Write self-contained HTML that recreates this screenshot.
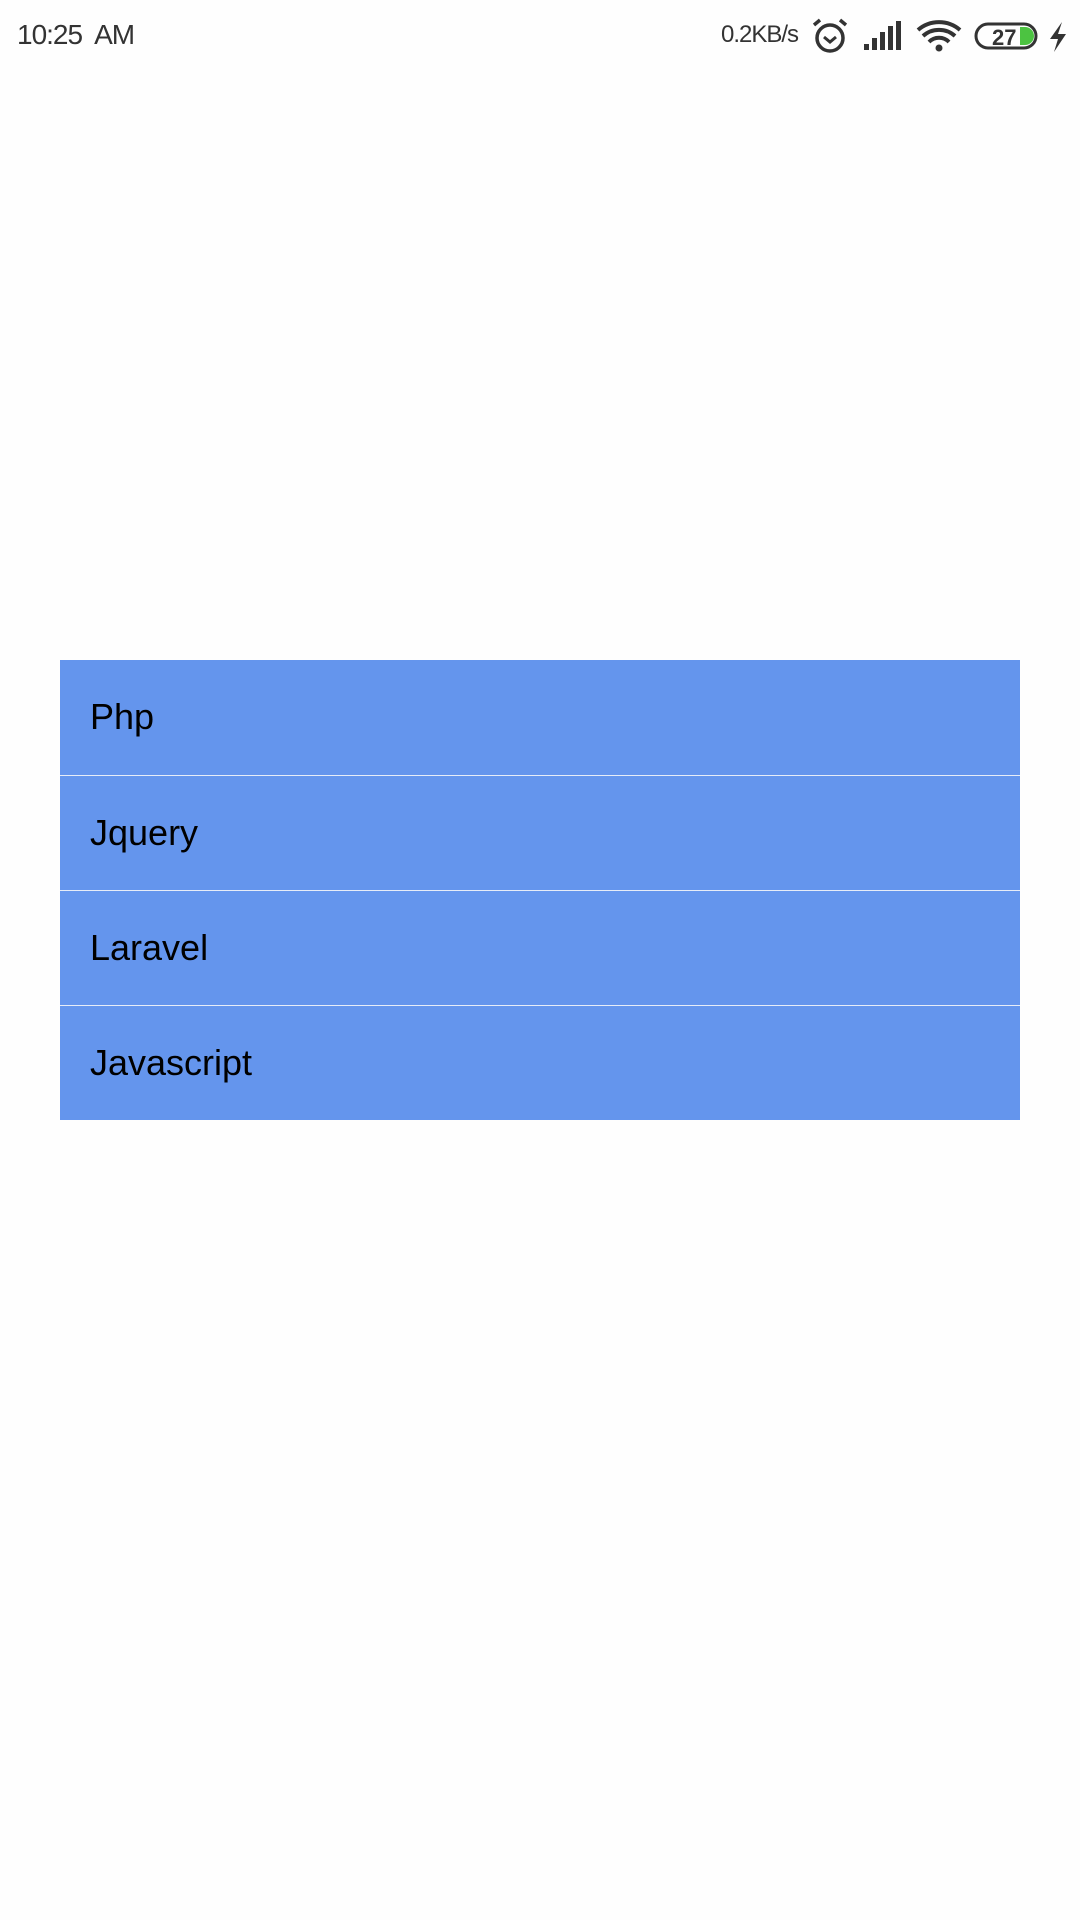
<!DOCTYPE html>
<html><head><meta charset="utf-8"><style>
body{margin:0;width:1080px;height:1920px;background:#fefefe;font-family:"Liberation Sans",sans-serif;position:relative;overflow:hidden}
.sb{position:absolute;color:#333;font-size:28px}
.list{position:absolute;left:60px;top:660px;width:960px}
.row{height:115px;background:#6495ed;border-top:1px solid #e6ecf8;box-sizing:border-box;font-size:36px;color:#000;padding-left:30px;line-height:114px}
.row:first-child{border-top:none}
</style></head><body>
<div class="sb" style="left:17px;top:19px;font-size:28px;letter-spacing:-1px">10:25&nbsp; AM</div>
<div class="sb" style="left:721px;top:21px;font-size:24px;letter-spacing:-1px">0.2KB/s</div>
<svg style="position:absolute;left:810px;top:18px" width="270" height="36" viewBox="810 18 270 36">
 <circle cx="830" cy="38" r="13" fill="none" stroke="#333" stroke-width="3.5"/>
 <path d="M824 37l6 5 6-5" fill="none" stroke="#333" stroke-width="3"/>
 <path d="M814 25l6-5M846 25l-6-5" stroke="#333" stroke-width="3.5"/>
 <rect x="864" y="44" width="5" height="6" fill="#333"/><rect x="872" y="38" width="5" height="12" fill="#333"/><rect x="880" y="32" width="5" height="18" fill="#333"/><rect x="888" y="26" width="5" height="24" fill="#333"/><rect x="896" y="21" width="5" height="29" fill="#333"/>
 <path d="M918 30a32 32 0 0 1 42 0M923 36a24 24 0 0 1 32 0M929 42a14 14 0 0 1 20 0" fill="none" stroke="#333" stroke-width="4"/>
 <circle cx="939" cy="48" r="3.5" fill="#333"/>
 <rect x="976" y="24" width="60" height="24" rx="12" fill="none" stroke="#333" stroke-width="3"/>
 <path d="M1020 27h5a9 9 0 0 1 0 18h-5z" fill="#4cc341"/>
 <text x="992" y="45" font-family="Liberation Sans" font-weight="bold" font-size="22" fill="#333">27</text>
 <path d="M1062 22l-12 17h8l-4 13 12-18h-8z" fill="#333"/>
</svg>
<div class="list">
<div class="row">Php</div>
<div class="row">Jquery</div>
<div class="row">Laravel</div>
<div class="row">Javascript</div>
</div>
</body></html>
